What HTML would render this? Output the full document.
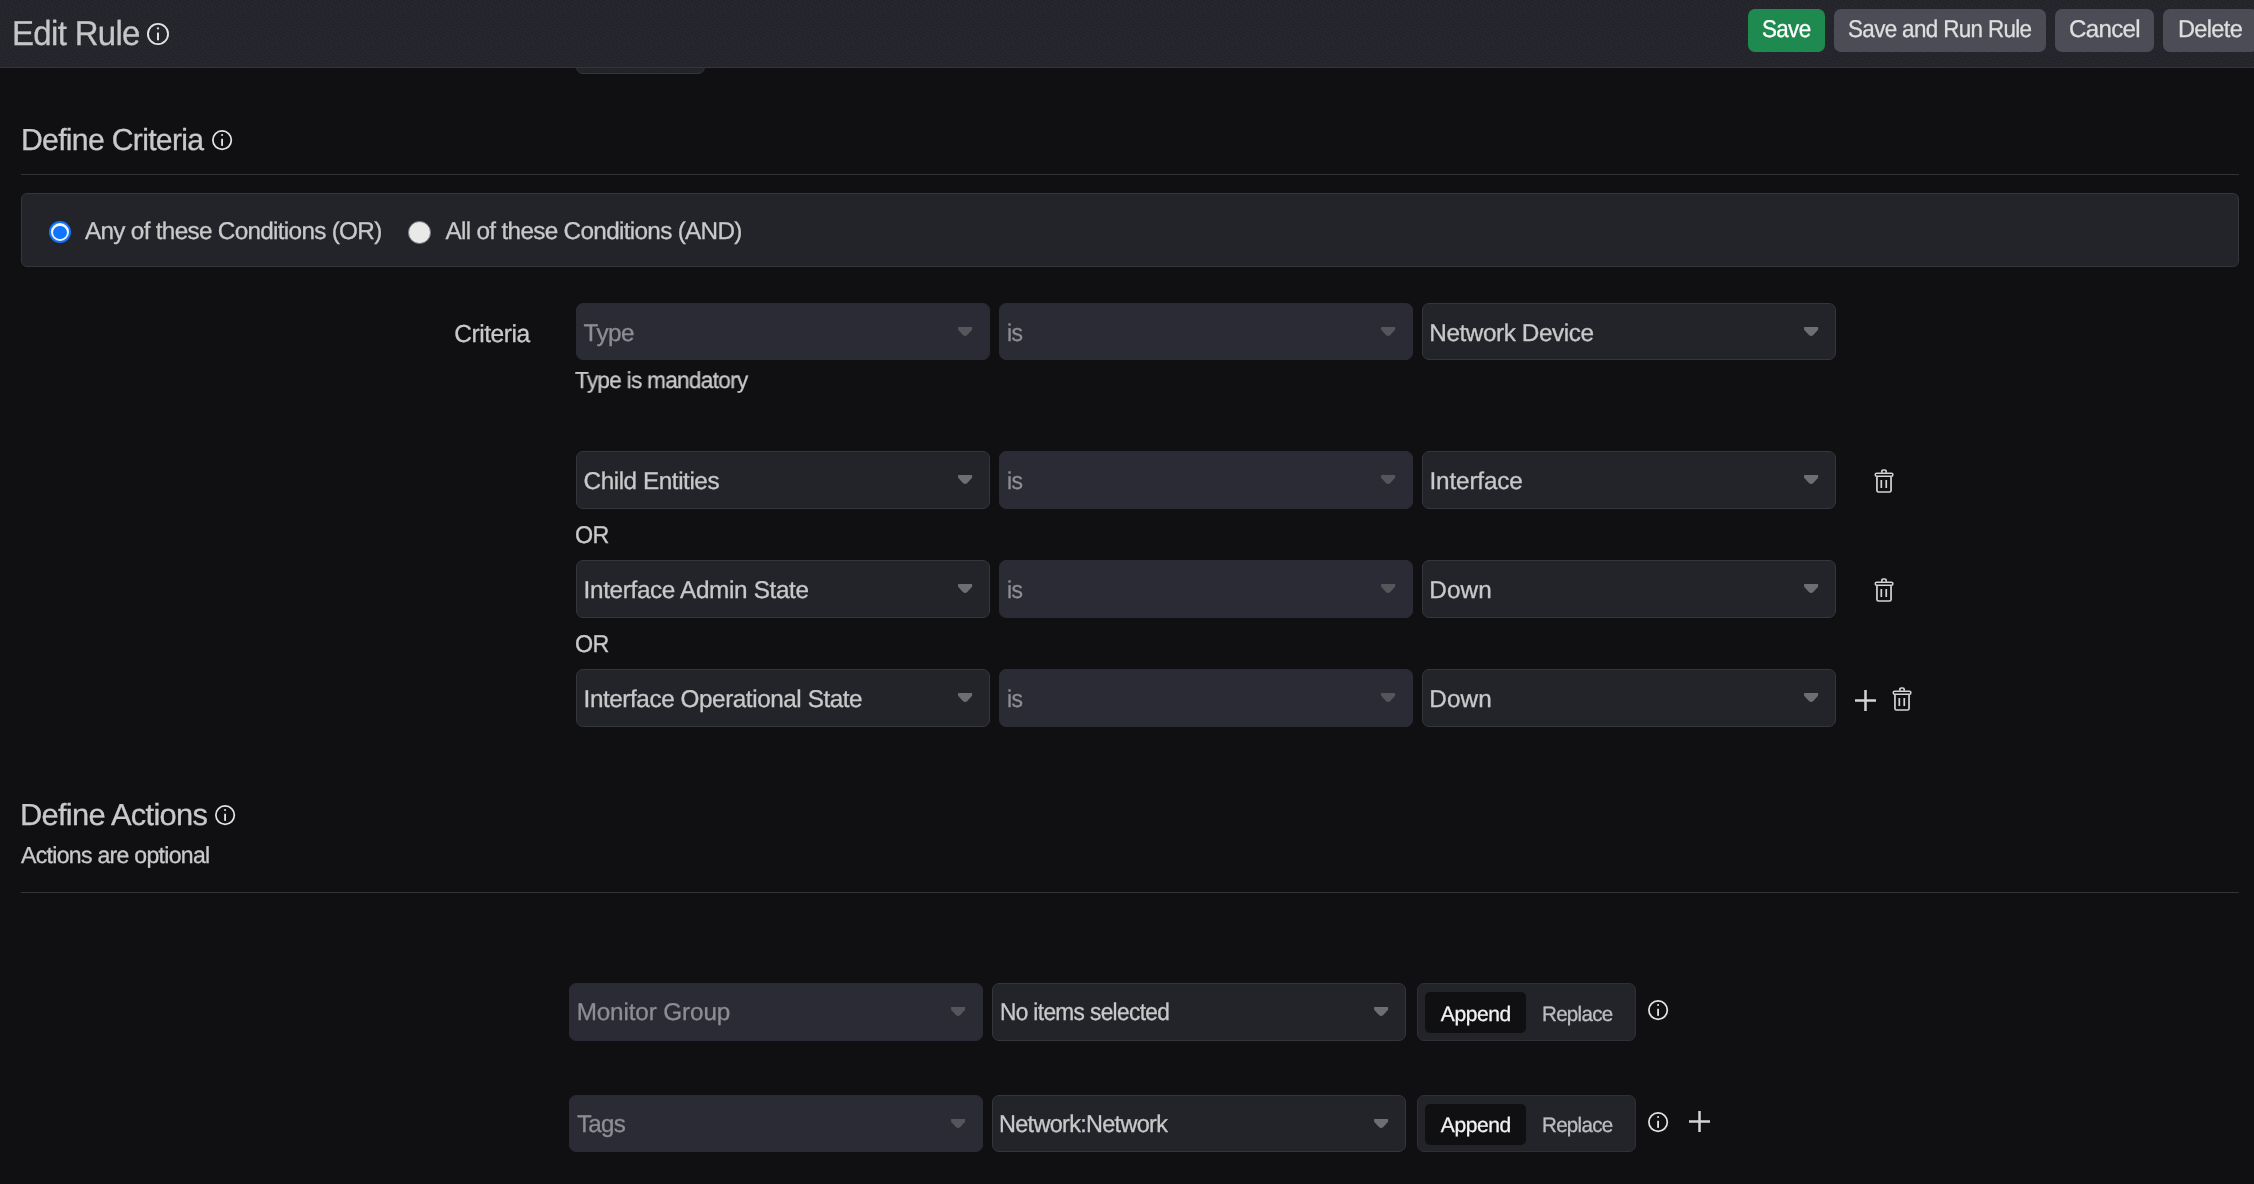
<!DOCTYPE html>
<html lang="en">
<head>
<meta charset="utf-8">
<title>Edit Rule</title>
<style>
*{box-sizing:border-box;margin:0;padding:0}
html,body{width:2254px;height:1184px;overflow:hidden;background:#101013}
body{position:relative;font-family:"Liberation Sans",sans-serif;color:#c9c9ca;-webkit-text-stroke:0.3px;text-rendering:geometricPrecision}
#root{position:absolute;left:0;top:0;width:2254px;height:1184px;will-change:transform}
.abs{position:absolute;white-space:nowrap}
.t{position:absolute;white-space:nowrap;line-height:1;transform-origin:0 0}
#hdr{left:0;top:0;width:2254px;height:68px;background:#24252b;border-bottom:1px solid #34353b}
.btn{position:absolute;top:9px;height:43px;border-radius:7px;background:#4b4c55}
.btn.save{background:#1f8a4f}
.btn span,.sel span,.tog span{transform-origin:0 0}
.btn span{position:absolute;white-space:nowrap;line-height:1;font-size:24.3px;color:#dededf}
.btn.save span{color:#fff}
.hr{position:absolute;left:21px;width:2218px;height:1px;background:#323338}
#panel{left:21px;top:193px;width:2218px;height:74px;background:#23242a;border:1px solid #35363a;border-radius:6px}
.sel{position:absolute;width:414px;height:57px;border-radius:7px;background:#23242a;border:1px solid #35363b}
.sel.dis{background:#2a2b34;border-color:#2a2b34}
.sel span{position:absolute;line-height:1;font-size:24.3px;white-space:nowrap;color:#c9c9ca}
.sel.dis span{color:#8d8e94}
.sel svg{position:absolute;left:380.9px;top:23px}
.tog{position:absolute;width:219px;height:58px;border-radius:7px;background:#23242a;border:1px solid #2f3037}
.tog i{position:absolute;left:7px;top:8px;width:101px;height:41px;border-radius:5px;background:#101013}
.tog span{position:absolute;line-height:1;font-size:21px;white-space:nowrap}
.tog .a{color:#f2f2f2}
.tog .r{color:#bdbdc0}
svg{display:block;overflow:visible}
</style>
</head>
<body>
<div id="root">
<div class="abs" style="left:576px;top:60px;width:129px;height:14px;border:1px solid #35363b;border-radius:7px;background:#23242a"></div>
<div id="hdr" class="abs"></div>
<svg class="abs" style="left:0;top:0" width="2254" height="67"><defs><pattern id="dz" width="32" height="32" patternUnits="userSpaceOnUse"><path d="M0 6h1v1h-1zM0 9h1v1h-1zM0 22h1v1h-1zM0 30h1v1h-1zM1 4h1v1h-1zM1 13h1v1h-1zM1 16h1v1h-1zM1 19h1v1h-1zM1 24h1v1h-1zM1 27h1v1h-1zM2 0h1v1h-1zM2 8h1v1h-1zM2 21h1v1h-1zM3 11h1v1h-1zM3 14h1v1h-1zM3 17h1v1h-1zM3 25h1v1h-1zM3 29h1v1h-1zM4 3h1v1h-1zM4 6h1v1h-1zM4 20h1v1h-1zM5 1h1v1h-1zM5 9h1v1h-1zM5 16h1v1h-1zM5 23h1v1h-1zM5 27h1v1h-1zM6 4h1v1h-1zM6 12h1v1h-1zM6 19h1v1h-1zM6 30h1v1h-1zM7 10h1v1h-1zM7 14h1v1h-1zM7 22h1v1h-1zM7 26h1v1h-1zM8 1h1v1h-1zM8 18h1v1h-1zM8 29h1v1h-1zM9 7h1v1h-1zM9 16h1v1h-1zM9 23h1v1h-1zM9 31h1v1h-1zM10 3h1v1h-1zM10 10h1v1h-1zM10 14h1v1h-1zM10 21h1v1h-1zM10 28h1v1h-1zM11 0h1v1h-1zM11 8h1v1h-1zM11 12h1v1h-1zM11 17h1v1h-1zM11 25h1v1h-1zM12 4h1v1h-1zM12 15h1v1h-1zM12 22h1v1h-1zM13 2h1v1h-1zM13 6h1v1h-1zM13 13h1v1h-1zM13 18h1v1h-1zM13 28h1v1h-1zM13 31h1v1h-1zM14 9h1v1h-1zM14 16h1v1h-1zM15 0h1v1h-1zM15 5h1v1h-1zM15 11h1v1h-1zM15 20h1v1h-1zM15 27h1v1h-1zM16 7h1v1h-1zM16 14h1v1h-1zM16 18h1v1h-1zM16 22h1v1h-1zM16 25h1v1h-1zM17 2h1v1h-1zM17 12h1v1h-1zM17 30h1v1h-1zM18 4h1v1h-1zM18 16h1v1h-1zM18 26h1v1h-1zM19 7h1v1h-1zM19 11h1v1h-1zM19 19h1v1h-1zM19 31h1v1h-1zM20 5h1v1h-1zM20 9h1v1h-1zM21 3h1v1h-1zM21 12h1v1h-1zM21 16h1v1h-1zM21 22h1v1h-1zM21 28h1v1h-1zM22 1h1v1h-1zM22 10h1v1h-1zM22 14h1v1h-1zM22 24h1v1h-1zM23 6h1v1h-1zM23 19h1v1h-1zM23 30h1v1h-1zM24 9h1v1h-1zM24 27h1v1h-1zM25 0h1v1h-1zM25 3h1v1h-1zM25 14h1v1h-1zM25 17h1v1h-1zM25 21h1v1h-1zM25 25h1v1h-1zM25 29h1v1h-1zM26 5h1v1h-1zM26 8h1v1h-1zM26 12h1v1h-1zM26 23h1v1h-1zM27 20h1v1h-1zM27 31h1v1h-1zM28 1h1v1h-1zM28 6h1v1h-1zM28 11h1v1h-1zM28 15h1v1h-1zM28 18h1v1h-1zM28 27h1v1h-1zM29 4h1v1h-1zM29 22h1v1h-1zM29 29h1v1h-1zM30 7h1v1h-1zM30 13h1v1h-1zM30 16h1v1h-1zM30 20h1v1h-1zM30 26h1v1h-1zM31 0h1v1h-1zM31 3h1v1h-1zM31 11h1v1h-1zM31 18h1v1h-1zM31 28h1v1h-1z" fill="#2d2e35"/></pattern></defs><rect width="2254" height="67" fill="url(#dz)"/></svg>
<div class="t" id="t-edit" style="left:12.25px;top:17.00px;font-size:34.7px;letter-spacing:-0.700px;transform:scaleX(0.9503);color:#c6c6c7">Edit Rule</div>
<svg class="abs" style="left:147.00px;top:23.00px" width="22.00" height="22.00" viewBox="0 0 20 20"><circle cx="10" cy="10" r="9.15" fill="none" stroke="#e4e4e4" stroke-width="1.7"/><rect x="9.1" y="8.7" width="1.8" height="7" fill="#e4e4e4"/><circle cx="10" cy="4.95" r="1" fill="#e4e4e4"/></svg>
<div class="btn save" style="left:1748px;width:77px"><span id="b1" style="left:14.08px;top:9.00px;letter-spacing:-0.700px;transform:scaleX(0.9224);">Save</span></div>
<div class="btn" style="left:1834px;width:212px"><span id="b2" style="left:13.92px;top:9.00px;letter-spacing:-0.700px;transform:scaleX(0.9227);">Save and Run Rule</span></div>
<div class="btn" style="left:2055px;width:99px"><span id="b3" style="left:14.08px;top:9.00px;letter-spacing:-0.700px;transform:scaleX(0.9919);">Cancel</span></div>
<div class="btn" style="left:2163px;width:95px"><span id="b4" style="left:15.01px;top:9.00px;letter-spacing:-0.700px;transform:scaleX(0.9714);">Delete</span></div>
<div class="t" id="t-dc" style="left:21.21px;top:125.00px;font-size:30.4px;letter-spacing:-0.700px;transform:scaleX(0.9927);">Define Criteria</div>
<svg class="abs" style="left:212.00px;top:129.50px" width="20.20" height="20.20" viewBox="0 0 20 20"><circle cx="10" cy="10" r="9.15" fill="none" stroke="#e4e4e4" stroke-width="1.7"/><rect x="9.1" y="8.7" width="1.8" height="7" fill="#e4e4e4"/><circle cx="10" cy="4.95" r="1" fill="#e4e4e4"/></svg>
<div class="hr" style="top:174px"></div>
<div id="panel" class="abs"></div>
<div class="abs" style="left:49px;top:221.2px;width:22px;height:22px;border-radius:50%;background:#f8f5ee;border:2px solid #0f75ff"></div><div class="abs" style="left:53.4px;top:225.6px;width:13.2px;height:13.2px;border-radius:50%;background:#0f75ff"></div>
<div class="t" id="t-any" style="left:84.84px;top:220.00px;font-size:24.3px;letter-spacing:-0.700px;transform:scaleX(1.0006);">Any of these Conditions (OR)</div>
<div class="abs" style="left:408.2px;top:221.2px;width:22.6px;height:22.6px;border-radius:50%;background:#e9e9e8;border:1.6px solid #727378"></div>
<div class="t" id="t-all" style="left:445.50px;top:220.00px;font-size:24.3px;letter-spacing:-0.681px;">All of these Conditions (AND)</div>
<div class="t" id="t-crit" style="left:454.15px;top:323.00px;font-size:24.6px;letter-spacing:-0.474px;">Criteria</div>
<div class="sel dis" style="left:576px;top:303px;height:57px"><span id="s1" style="left:6.60px;top:18.00px;letter-spacing:-0.580px;">Type</span><svg width="14.2" height="9.2" viewBox="0 0 14.2 9.2"><path d="M0.1 0.1H14.1V2.7L9.3 8Q7.1 9.9 4.9 8L0.1 2.7Z" fill="#55565c"/></svg></div>
<div class="sel dis" style="left:999px;top:303px;height:57px"><span id="s2" style="left:7.07px;top:18.00px;letter-spacing:-0.700px;transform:scaleX(0.9439);">is</span><svg width="14.2" height="9.2" viewBox="0 0 14.2 9.2"><path d="M0.1 0.1H14.1V2.7L9.3 8Q7.1 9.9 4.9 8L0.1 2.7Z" fill="#55565c"/></svg></div>
<div class="sel" style="left:1422px;top:303px;height:57px"><span id="s3" style="left:6.30px;top:18.00px;letter-spacing:-0.419px;">Network Device</span><svg width="14.2" height="9.2" viewBox="0 0 14.2 9.2"><path d="M0.1 0.1H14.1V2.7L9.3 8Q7.1 9.9 4.9 8L0.1 2.7Z" fill="#6d6e74"/></svg></div>
<div class="sel" style="left:576px;top:451px;height:58px"><span id="s4" style="left:6.56px;top:18.00px;letter-spacing:-0.445px;">Child Entities</span><svg width="14.2" height="9.2" viewBox="0 0 14.2 9.2"><path d="M0.1 0.1H14.1V2.7L9.3 8Q7.1 9.9 4.9 8L0.1 2.7Z" fill="#6d6e74"/></svg></div>
<div class="sel dis" style="left:999px;top:451px;height:58px"><span id="s5" style="left:7.06px;top:18.00px;letter-spacing:-0.700px;transform:scaleX(0.9439);">is</span><svg width="14.2" height="9.2" viewBox="0 0 14.2 9.2"><path d="M0.1 0.1H14.1V2.7L9.3 8Q7.1 9.9 4.9 8L0.1 2.7Z" fill="#55565c"/></svg></div>
<div class="sel" style="left:1422px;top:451px;height:58px"><span id="s6" style="left:6.39px;top:18.00px;letter-spacing:-0.130px;">Interface</span><svg width="14.2" height="9.2" viewBox="0 0 14.2 9.2"><path d="M0.1 0.1H14.1V2.7L9.3 8Q7.1 9.9 4.9 8L0.1 2.7Z" fill="#6d6e74"/></svg></div>
<div class="sel" style="left:576px;top:560px;height:58px"><span id="s7" style="left:6.60px;top:18.00px;letter-spacing:-0.346px;">Interface Admin State</span><svg width="14.2" height="9.2" viewBox="0 0 14.2 9.2"><path d="M0.1 0.1H14.1V2.7L9.3 8Q7.1 9.9 4.9 8L0.1 2.7Z" fill="#6d6e74"/></svg></div>
<div class="sel dis" style="left:999px;top:560px;height:58px"><span id="s8" style="left:7.06px;top:18.00px;letter-spacing:-0.700px;transform:scaleX(0.9439);">is</span><svg width="14.2" height="9.2" viewBox="0 0 14.2 9.2"><path d="M0.1 0.1H14.1V2.7L9.3 8Q7.1 9.9 4.9 8L0.1 2.7Z" fill="#55565c"/></svg></div>
<div class="sel" style="left:1422px;top:560px;height:58px"><span id="s9" style="left:6.30px;top:18.00px;letter-spacing:0.100px;">Down</span><svg width="14.2" height="9.2" viewBox="0 0 14.2 9.2"><path d="M0.1 0.1H14.1V2.7L9.3 8Q7.1 9.9 4.9 8L0.1 2.7Z" fill="#6d6e74"/></svg></div>
<div class="sel" style="left:576px;top:669px;height:58px"><span id="s10" style="left:6.60px;top:18.00px;letter-spacing:-0.437px;">Interface Operational State</span><svg width="14.2" height="9.2" viewBox="0 0 14.2 9.2"><path d="M0.1 0.1H14.1V2.7L9.3 8Q7.1 9.9 4.9 8L0.1 2.7Z" fill="#6d6e74"/></svg></div>
<div class="sel dis" style="left:999px;top:669px;height:58px"><span id="s11" style="left:7.06px;top:18.00px;letter-spacing:-0.700px;transform:scaleX(0.9439);">is</span><svg width="14.2" height="9.2" viewBox="0 0 14.2 9.2"><path d="M0.1 0.1H14.1V2.7L9.3 8Q7.1 9.9 4.9 8L0.1 2.7Z" fill="#55565c"/></svg></div>
<div class="sel" style="left:1422px;top:669px;height:58px"><span id="s12" style="left:6.30px;top:18.00px;letter-spacing:0.100px;">Down</span><svg width="14.2" height="9.2" viewBox="0 0 14.2 9.2"><path d="M0.1 0.1H14.1V2.7L9.3 8Q7.1 9.9 4.9 8L0.1 2.7Z" fill="#6d6e74"/></svg></div>
<div class="t" id="t-mand" style="left:575.10px;top:369.00px;font-size:23.2px;letter-spacing:-0.700px;transform:scaleX(0.9711);">Type is mandatory</div>
<div class="t" id="t-or1" style="left:574.82px;top:524.00px;font-size:24.3px;letter-spacing:-0.700px;transform:scaleX(0.9595);">OR</div>
<div class="t" id="t-or2" style="left:574.82px;top:633.00px;font-size:24.3px;letter-spacing:-0.700px;transform:scaleX(0.9595);">OR</div>
<svg class="abs" style="left:1873.70px;top:468.80px" width="20" height="24" viewBox="0 0 20 24"><g fill="none" stroke="#d4d4d5" stroke-width="1.7"><path d="M7.85 3.7V2.45Q7.85 1 9.3 1H10.75Q12.2 1 12.2 2.45V3.7"/><rect x="1.2" y="4.25" width="17.7" height="3" rx="1.5" stroke-width="1.5"/><path d="M2.95 7.9V21.4Q2.95 23 4.55 23H15.45Q17.05 23 17.05 21.4V7.9"/><path d="M7.3 11.1V19.1M12.25 11.1V19.1"/></g></svg>
<svg class="abs" style="left:1873.70px;top:577.80px" width="20" height="24" viewBox="0 0 20 24"><g fill="none" stroke="#d4d4d5" stroke-width="1.7"><path d="M7.85 3.7V2.45Q7.85 1 9.3 1H10.75Q12.2 1 12.2 2.45V3.7"/><rect x="1.2" y="4.25" width="17.7" height="3" rx="1.5" stroke-width="1.5"/><path d="M2.95 7.9V21.4Q2.95 23 4.55 23H15.45Q17.05 23 17.05 21.4V7.9"/><path d="M7.3 11.1V19.1M12.25 11.1V19.1"/></g></svg>
<svg class="abs" style="left:1854.60px;top:690.00px" width="21" height="21" viewBox="0 0 21 21"><path d="M10.5 0V21M0 10.5H21" stroke="#d4d4d5" stroke-width="2.5" fill="none"/></svg>
<svg class="abs" style="left:1892.20px;top:687.00px" width="20" height="24" viewBox="0 0 20 24"><g fill="none" stroke="#d4d4d5" stroke-width="1.7"><path d="M7.85 3.7V2.45Q7.85 1 9.3 1H10.75Q12.2 1 12.2 2.45V3.7"/><rect x="1.2" y="4.25" width="17.7" height="3" rx="1.5" stroke-width="1.5"/><path d="M2.95 7.9V21.4Q2.95 23 4.55 23H15.45Q17.05 23 17.05 21.4V7.9"/><path d="M7.3 11.1V19.1M12.25 11.1V19.1"/></g></svg>
<div class="t" id="t-da" style="left:20.16px;top:800.00px;font-size:30.4px;letter-spacing:-0.700px;transform:scaleX(1.0144);">Define Actions</div>
<svg class="abs" style="left:215.30px;top:804.80px" width="20.20" height="20.20" viewBox="0 0 20 20"><circle cx="10" cy="10" r="9.15" fill="none" stroke="#e4e4e4" stroke-width="1.7"/><rect x="9.1" y="8.7" width="1.8" height="7" fill="#e4e4e4"/><circle cx="10" cy="4.95" r="1" fill="#e4e4e4"/></svg>
<div class="t" id="t-opt" style="left:20.88px;top:844.00px;font-size:23.2px;letter-spacing:-0.700px;transform:scaleX(0.9941);">Actions are optional</div>
<div class="hr" style="top:892px"></div>
<div class="sel dis" style="left:569px;top:983px;height:58px"><span id="s13" style="left:6.63px;top:17.00px;letter-spacing:-0.134px;">Monitor Group</span><svg width="14.2" height="9.2" viewBox="0 0 14.2 9.2"><path d="M0.1 0.1H14.1V2.7L9.3 8Q7.1 9.9 4.9 8L0.1 2.7Z" fill="#55565c"/></svg></div>
<div class="sel" style="left:992px;top:983px;height:58px"><span id="s14" style="left:6.57px;top:17.00px;letter-spacing:-0.700px;transform:scaleX(0.9339);">No items selected</span><svg width="14.2" height="9.2" viewBox="0 0 14.2 9.2"><path d="M0.1 0.1H14.1V2.7L9.3 8Q7.1 9.9 4.9 8L0.1 2.7Z" fill="#6d6e74"/></svg></div>
<div class="tog" style="left:1417px;top:983px;height:58px"><i></i><span id="ga1" class="a" style="left:22.77px;top:20.00px;letter-spacing:-0.377px;">Append</span><span id="gr1" class="r" style="left:123.91px;top:20.00px;letter-spacing:-0.700px;transform:scaleX(0.9771);">Replace</span></div>
<svg class="abs" style="left:1648.10px;top:1000.40px" width="20.20" height="20.20" viewBox="0 0 20 20"><circle cx="10" cy="10" r="9.15" fill="none" stroke="#e4e4e4" stroke-width="1.7"/><rect x="9.1" y="8.7" width="1.8" height="7" fill="#e4e4e4"/><circle cx="10" cy="4.95" r="1" fill="#e4e4e4"/></svg>
<div class="sel dis" style="left:569px;top:1095px;height:57px"><span id="s15" style="left:7.42px;top:17.00px;letter-spacing:-0.700px;transform:scaleX(0.9915);">Tags</span><svg width="14.2" height="9.2" viewBox="0 0 14.2 9.2"><path d="M0.1 0.1H14.1V2.7L9.3 8Q7.1 9.9 4.9 8L0.1 2.7Z" fill="#55565c"/></svg></div>
<div class="sel" style="left:992px;top:1095px;height:57px"><span id="s16" style="left:6.12px;top:17.00px;letter-spacing:-0.700px;transform:scaleX(0.9642);">Network:Network</span><svg width="14.2" height="9.2" viewBox="0 0 14.2 9.2"><path d="M0.1 0.1H14.1V2.7L9.3 8Q7.1 9.9 4.9 8L0.1 2.7Z" fill="#6d6e74"/></svg></div>
<div class="tog" style="left:1417px;top:1095px;height:57px"><i></i><span id="ga2" class="a" style="left:22.77px;top:19.00px;letter-spacing:-0.377px;">Append</span><span id="gr2" class="r" style="left:123.91px;top:19.00px;letter-spacing:-0.700px;transform:scaleX(0.9771);">Replace</span></div>
<svg class="abs" style="left:1648.10px;top:1112.40px" width="20.20" height="20.20" viewBox="0 0 20 20"><circle cx="10" cy="10" r="9.15" fill="none" stroke="#e4e4e4" stroke-width="1.7"/><rect x="9.1" y="8.7" width="1.8" height="7" fill="#e4e4e4"/><circle cx="10" cy="4.95" r="1" fill="#e4e4e4"/></svg>
<svg class="abs" style="left:1688.70px;top:1111.00px" width="21" height="21" viewBox="0 0 21 21"><path d="M10.5 0V21M0 10.5H21" stroke="#d4d4d5" stroke-width="2.5" fill="none"/></svg>
</div>
</body>
</html>
